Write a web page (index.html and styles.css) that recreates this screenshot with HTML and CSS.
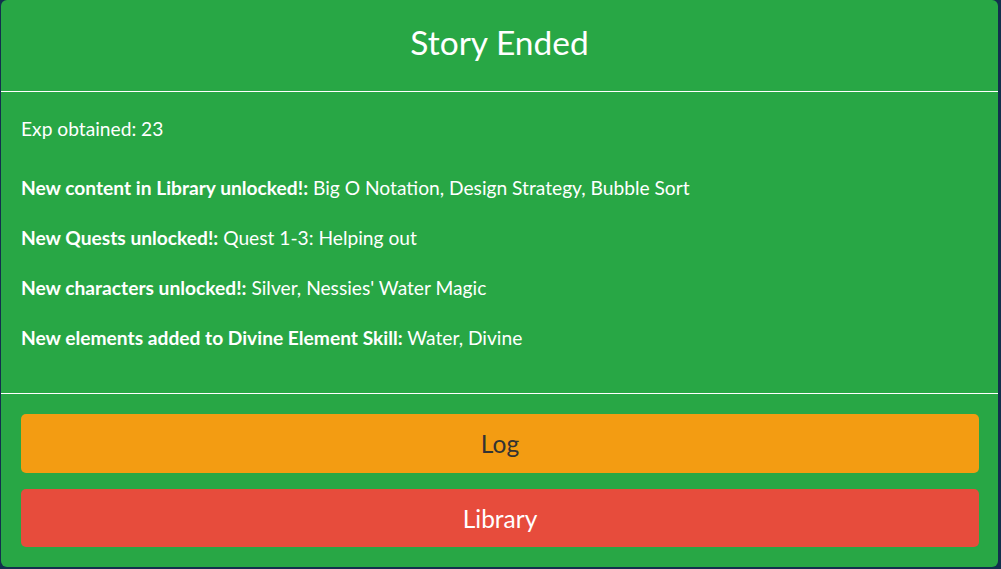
FILE: index.html
```html
<!DOCTYPE html>
<html>
<head>
<meta charset="utf-8">
<link rel="stylesheet" href="styles.css">
</head>
<body>
<div class="modal">
  <div class="modal-header">
    <h1 class="title">Story Ended</h1>
  </div>
  <div class="modal-body">
    <p class="exp">Exp obtained: 23</p>
    <p class="row"><b>New content in Library unlocked!:</b> Big O Notation, Design Strategy, Bubble Sort</p>
    <p class="row"><b>New Quests unlocked!:</b> Quest 1-3: Helping out</p>
    <p class="row"><b>New characters unlocked!:</b> Silver, Nessies' Water Magic</p>
    <p class="row"><b>New elements added to Divine Element Skill:</b> Water, Divine</p>
  </div>
  <div class="modal-footer">
    <button class="btn btn-log">Log</button>
    <button class="btn btn-library">Library</button>
  </div>
</div>
</body>
</html>
```
FILE: styles.css
```css
html, body {
  margin: 0;
  height: 100%;
}
body {
  background: #12304d;
  padding: 0 3px 2px 1px;
  box-sizing: border-box;
  font-family: "Lato", "Open Sans", sans-serif;
  color: #fff;
}
.modal {
  background: #28a745;
  border-radius: 6px;
  height: 567px;
  display: flex;
  flex-direction: column;
  overflow: hidden;
}
.modal-header {
  height: 92px;
  box-sizing: border-box;
  padding-bottom: 7px;
  border-bottom: 1px solid #fff;
  display: flex;
  align-items: center;
  justify-content: center;
}
.title {
  margin: 0;
  font-weight: 400;
  font-size: 33.5px;
  line-height: 40px;
}
.modal-body {
  height: 302px;
  box-sizing: border-box;
  padding: 23px 20px 0;
  border-bottom: 1px solid #fff;
}
.modal-body p {
  margin: 0 0 23px;
  font-size: 19.2px;
  line-height: 27px;
}
.modal-body .exp {
  margin-bottom: 32px;
}
.modal-footer {
  padding: 20px 19px 20px 20px;
  display: flex;
  flex-direction: column;
  gap: 16px;
}
.btn {
  border: none;
  border-radius: 5px;
  height: 59px;
  font-family: inherit;
  font-size: 24.5px;
}
.btn-log {
  background: #f39c12;
  color: #333;
}
.btn-library {
  background: #e74c3c;
  color: #fff;
  height: 58px;
}
```
